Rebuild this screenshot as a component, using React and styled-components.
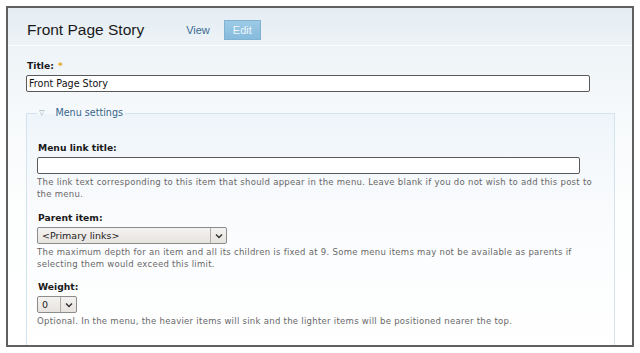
import styled, { createGlobalStyle } from "styled-components";

const GlobalStyle = createGlobalStyle`
    html, body {
        margin: 0;
        padding: 0;
        background: #ffffff;
    }
`

const Frame = styled.div`
    box-sizing: border-box;
    margin: 6px;
    width: 628px;
    height: 341px;
    border: 2px solid #606060;
    overflow: hidden;
    background: linear-gradient(#e5edf3 0, #edf3f7 37px, #f6f9fb 100px, #fdfefe 200px, #ffffff 100%);
    font-family: "DejaVu Sans", Verdana, sans-serif;
    color: #222;
`

const Header = styled.div`
    display: flex;
    align-items: center;
    height: 30px;
    padding: 7px 0 0 19px;
    border-bottom: 1px solid rgba(255, 255, 255, 0.8);
`

const PageTitle = styled.h1`
    margin: 0;
    font-family: "Liberation Sans", Arial, sans-serif;
    font-size: 15.5px;
    font-weight: normal;
    color: #1a1a1a;
`

const Tab = styled.a`
    display: inline-flex;
    align-items: center;
    justify-content: center;
    height: 18px;
    padding: 0 ${p => (p.$active ? "8px" : "0")};
    margin-left: ${p => p.$gap}px;
    font-family: "Liberation Sans", Arial, sans-serif;
    font-size: 11px;
    color: ${p => (p.$active ? "#eef6fb" : "#3a6a92")};
    background: ${p => (p.$active ? "linear-gradient(#9ccae6, #86bbdc)" : "none")};
    border: ${p => (p.$active ? "1px solid #80b3d3" : "none")};
    text-decoration: none;
`

const Content = styled.div`
    padding: 14px 18px 0 18px;
`

const Label = styled.div`
    font-size: 9.2px;
    line-height: 12px;
    font-weight: bold;
    color: #1a1a1a;
    margin-bottom: 3px;
    padding-left: 1px;
`

const Required = styled.span`
    color: #e5a812;
    margin-left: 4px;
`

const TextInput = styled.input`
    display: block;
    box-sizing: border-box;
    width: ${p => p.$width}px;
    height: 17px;
    margin: 0;
    padding: 0 2px;
    border: 1px solid #595959;
    border-radius: 2px;
    background: #ffffff;
    font-family: "DejaVu Sans", Verdana, sans-serif;
    font-size: 9.6px;
    color: #111;
    outline: none;
`

const Fieldset = styled.fieldset`
    box-sizing: border-box;
    width: 589px;
    margin: 15px 0 0 0;
    padding: 0 10px 40px 10px;
    border: 1px solid #d4e4ef;
    background: linear-gradient(#eef5fa 0, #f6f9fc 60px, #fcfdfe 140px, #ffffff 100%);
`

const Legend = styled.legend`
    display: flex;
    align-items: center;
    padding: 0 2px;
    font-size: 9.6px;
    line-height: 12px;
    color: #35668c;
`

const Triangle = styled.span`
    font-size: 7px;
    color: #8a9aa6;
    margin-right: 11px;
`

const Item = styled.div`
    margin-top: ${p => p.$top}px;
`

const Description = styled.div`
    margin-top: 3px;
    font-size: 8.5px;
    line-height: 11.5px;
    color: #686868;
    letter-spacing: 0.28px;
    width: 562px;
`

const Select = styled.div`
    display: flex;
    box-sizing: border-box;
    width: ${p => p.$width}px;
    height: 17px;
    border: 1px solid #8c8c8c;
    border-radius: 2px;
    background: linear-gradient(#f4f2f0, #e7e3df);
    font-size: 9.5px;
    color: #222;
`

const SelectValue = styled.div`
    flex: 1;
    display: flex;
    align-items: center;
    padding-left: 4px;
`

const SelectArrow = styled.div`
    width: 15px;
    display: flex;
    align-items: center;
    justify-content: center;
    border-left: 1px solid #b0aba6;
`

const Chevron = () => (
    <svg width="8" height="6" viewBox="0 0 8 6">
        <path d="M1 1.5 L4 4.5 L7 1.5" fill="none" stroke="#333" strokeWidth="1.4" />
    </svg>
)

const App = () => {
    return (
        <>
            <GlobalStyle />
            <Frame>
                <Header>
                    <PageTitle>Front Page Story</PageTitle>
                    <Tab $gap={42}>View</Tab>
                    <Tab $gap={14} $active>Edit</Tab>
                </Header>
                <Content>
                    <Label>Title:<Required>*</Required></Label>
                    <TextInput $width={564} defaultValue="Front Page Story" readOnly />
                    <Fieldset>
                        <Legend><Triangle>▽</Triangle>Menu settings</Legend>
                        <Item $top={23}>
                            <Label>Menu link title:</Label>
                            <TextInput $width={543} defaultValue="" readOnly />
                            <Description>
                                The link text corresponding to this item that should appear in the menu. Leave blank if you do not wish to add this post to the menu.
                            </Description>
                        </Item>
                        <Item $top={12}>
                            <Label>Parent item:</Label>
                            <Select $width={190}>
                                <SelectValue>&lt;Primary links&gt;</SelectValue>
                                <SelectArrow><Chevron /></SelectArrow>
                            </Select>
                            <Description>
                                The maximum depth for an item and all its children is fixed at 9. Some menu items may not be available as parents if selecting them would exceed this limit.
                            </Description>
                        </Item>
                        <Item $top={11}>
                            <Label>Weight:</Label>
                            <Select $width={40}>
                                <SelectValue>0</SelectValue>
                                <SelectArrow><Chevron /></SelectArrow>
                            </Select>
                            <Description>
                                Optional. In the menu, the heavier items will sink and the lighter items will be positioned nearer the top.
                            </Description>
                        </Item>
                    </Fieldset>
                </Content>
            </Frame>
        </>
    )
}

export default App
